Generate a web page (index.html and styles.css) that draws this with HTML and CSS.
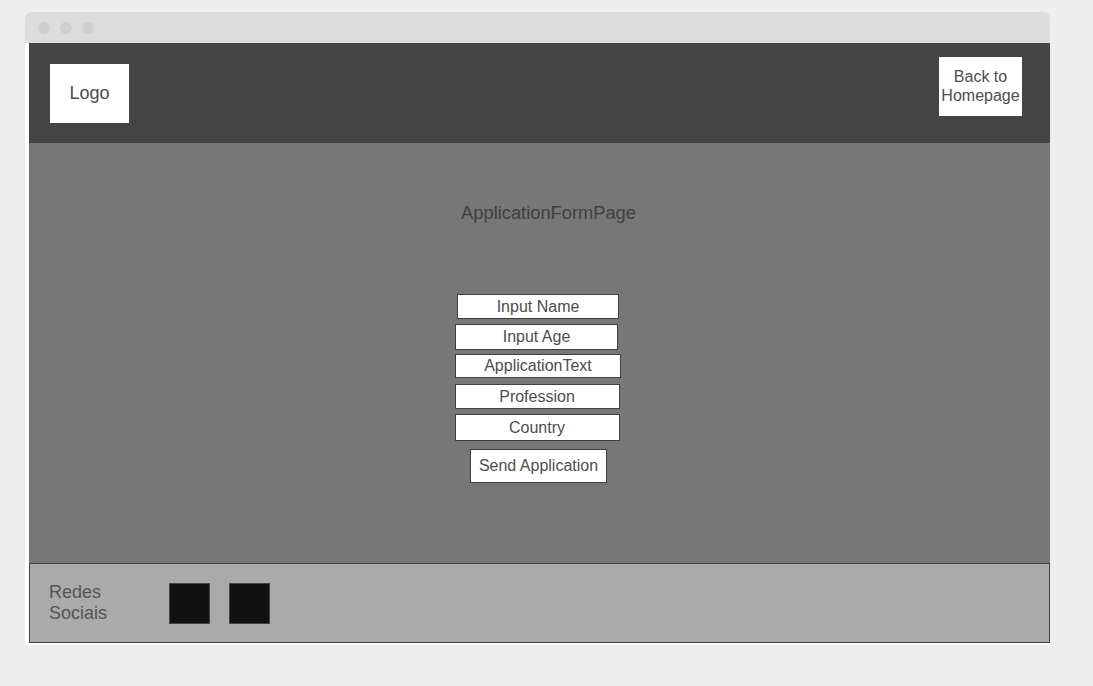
FILE: index.html
```html
<!DOCTYPE html>
<html>
<head>
<meta charset="utf-8">
<link rel="stylesheet" href="styles.css">
</head>
<body>
<div class="window">
  <div class="titlebar">
    <span class="dot"></span><span class="dot"></span><span class="dot"></span>
  </div>
  <div class="frame">
    <header class="header">
      <div class="logo">Logo</div>
      <div class="back">Back to<br>Homepage</div>
    </header>
    <main class="main">
      <div class="title">ApplicationFormPage</div>
      <div class="form">
        <div class="field f-name">Input Name</div>
        <div class="field f-age">Input Age</div>
        <div class="field f-text">ApplicationText</div>
        <div class="field f-prof">Profession</div>
        <div class="field f-country">Country</div>
        <div class="field f-send">Send Application</div>
      </div>
    </main>
    <footer class="footer">
      <div class="social-label">Redes<br>Sociais</div>
      <div class="sq"></div>
      <div class="sq"></div>
    </footer>
  </div>
</div>
</body>
</html>
```

FILE: styles.css
```css
html, body {
  margin: 0;
  padding: 0;
  background: #eeeeee;
  font-family: "Liberation Sans", Arial, sans-serif;
}
.window {
  margin: 12px 0 0 25px;
  width: 1025px;
}
.titlebar {
  height: 31px;
  background: #dddddd;
  border-radius: 6px 6px 0 0;
  display: flex;
  align-items: center;
  padding-left: 13px;
  gap: 10px;
  box-sizing: border-box;
}
.dot {
  width: 12px;
  height: 12px;
  border-radius: 50%;
  background: #cfcfcf;
}
.frame {
  background: #ffffff;
  padding: 0 0 2px 4px;
  box-shadow: 0 1px 2px rgba(0,0,0,0.06);
}
.header {
  height: 100px;
  background: #444444;
  display: flex;
  justify-content: space-between;
  align-items: flex-start;
  padding: 0 28px 0 21px;
}
.logo {
  margin-top: 21px;
  width: 79px;
  height: 59px;
  background: #fff;
  color: #4d4d4d;
  font-size: 18px;
  display: flex;
  align-items: center;
  justify-content: center;
}
.back {
  margin-top: 14px;
  width: 83px;
  height: 59px;
  background: #fff;
  color: #4d4d4d;
  font-size: 16px;
  line-height: 19px;
  text-align: center;
  box-sizing: border-box;
  padding-top: 10px;
}
.main {
  height: 420px;
  background: #777777;
  box-sizing: border-box;
  padding-top: 59px;
  display: flex;
  flex-direction: column;
  align-items: center;
}
.title {
  font-size: 18.3px;
  line-height: 21px;
  color: #404040;
  margin-left: 18px;
}
.form {
  margin-top: 71px;
  display: flex;
  flex-direction: column;
  align-items: center;
  margin-right: 3px;
}
.field {
  background: #fff;
  border: 1px solid #3f3f3f;
  box-sizing: border-box;
  color: #4d4d4d;
  font-size: 16px;
  display: flex;
  align-items: center;
  justify-content: center;
}
.f-name { width: 162px; height: 25px; }
.f-age { width: 163px; height: 26px; margin-top: 5px; margin-right: 3px; }
.f-text { width: 166px; height: 24px; margin-top: 4px; }
.f-prof { width: 165px; height: 25px; margin-top: 6px; margin-right: 2px; }
.f-country { width: 165px; height: 27px; margin-top: 5px; margin-right: 2px; }
.f-send { width: 137px; height: 34px; margin-top: 8px; margin-left: 1px; }
.footer {
  height: 80px;
  background: #aaaaaa;
  border: 1px solid #444444;
  box-sizing: border-box;
  display: flex;
  align-items: center;
  padding-left: 19px;
}
.social-label {
  font-size: 18px;
  line-height: 21px;
  color: #555;
  width: 120px;
  margin-top: -1px;
}
.sq {
  width: 41px;
  height: 41px;
  background: #111;
  border: 1px solid #444;
  box-sizing: border-box;
  margin-right: 19px;
}
```
